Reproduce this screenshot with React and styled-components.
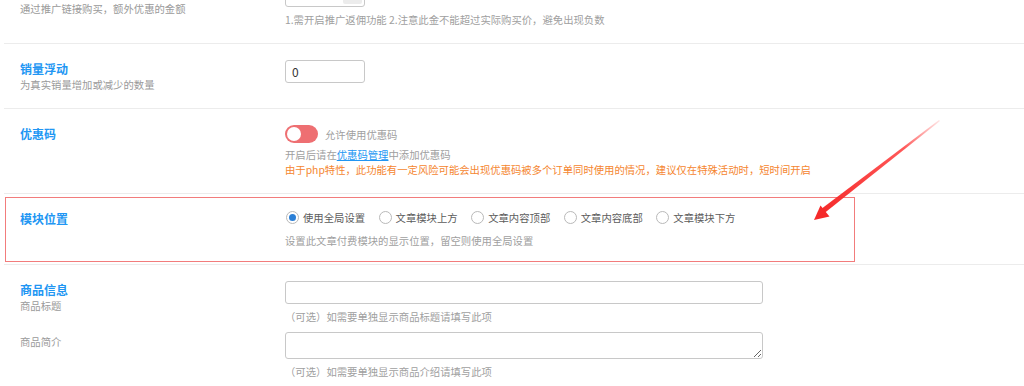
import React from "react";
import styled, { createGlobalStyle } from "styled-components";

const Global = createGlobalStyle`
  html, body { margin: 0; padding: 0; background: #fff; }
  body {
    font-family: "Noto Sans CJK SC", "Noto Sans", sans-serif;
    -webkit-font-smoothing: antialiased;
  }
  * { box-sizing: border-box; }
`;

const Viewport = styled.div`
  position: relative;
  width: 1024px;
  height: 386px;
  overflow: hidden;
`;

const Form = styled.div`
  margin-top: -32px;
  padding-left: 4px;
`;

const Row = styled.div`
  position: relative;
  display: flex;
  flex-direction: ${(p) => (p.$stack ? "column" : "row")};
  gap: ${(p) => (p.$stack ? "8px" : "0")};
  padding: 16px 0;
  border-bottom: 1px solid #ececec;
`;

const Line = styled.div`
  display: flex;
`;

const LabelCol = styled.div`
  width: 281px;
  flex: none;
  padding-left: 16px;
  padding-top: ${(p) => p.$pt || 0}px;
`;

const Title = styled.div`
  font-size: 12px;
  font-weight: 700;
  line-height: 17px;
  color: #2196f3;
`;

const Sub = styled.div`
  font-size: 10.35px;
  line-height: 15px;
  color: #9a9a9a;
`;

const Content = styled.div`
  flex: 1;
  display: flex;
  flex-direction: column;
  align-items: flex-start;
`;

const Help = styled.div`
  font-size: 10.35px;
  line-height: 15px;
  margin-top: ${(p) => p.$mt ?? 0}px;
  color: ${(p) => (p.$warn ? "#f5862f" : "#a0a0a0")};
`;

const Link = styled.a`
  color: #2196f3;
  text-decoration: underline;
`;

const Field = styled.div`
  display: flex;
  width: ${(p) => p.$w}px;
  height: ${(p) => p.$h || 23}px;
  border: 1px solid #c8c8c8;
  border-radius: 3px;
  background: #fff;
  overflow: hidden;
`;

const TextInput = styled.input`
  flex: 1;
  min-width: 0;
  border: none;
  outline: none;
  background: transparent;
  padding: 0 6px;
  font-family: inherit;
  font-size: 12px;
  color: #333;
`;

const Spinner = styled.span`
  width: 19px;
  margin: 2px 2px 2px 0;
  background: #ececec;
  border-radius: 2px;
`;

const TextArea = styled.textarea`
  width: 478px;
  height: 27px;
  border: 1px solid #c8c8c8;
  border-radius: 3px;
  padding: 3px 6px;
  font-family: inherit;
  font-size: 12px;
  resize: vertical;
  outline: none;
  display: block;
`;

const ToggleLine = styled.div`
  display: flex;
  align-items: center;
  gap: 7px;
  height: 18px;
  margin-bottom: 4px;
`;

const Toggle = styled.span`
  display: flex;
  align-items: center;
  width: 33px;
  height: 18px;
  padding: 2px;
  border-radius: 9px;
  background: #ee6f72;
  &::before {
    content: "";
    width: 14px;
    height: 14px;
    border-radius: 50%;
    background: #fff;
  }
`;

const ToggleText = styled.span`
  font-size: 10.35px;
  color: #a0a0a0;
`;

const RadioGroup = styled.div`
  display: flex;
  align-items: center;
  gap: 13.5px;
  height: 14px;
  padding-left: 1px;
`;

const RadioItem = styled.label`
  display: flex;
  align-items: center;
  gap: 4px;
  font-size: 10.35px;
  color: #5c5c5c;
`;

const RadioDot = styled.span`
  width: 13px;
  height: 13px;
  border-radius: 50%;
  border: 1px solid #b9b9b9;
  background: #fff;
  display: flex;
  align-items: center;
  justify-content: center;
  &::after {
    content: "";
    width: 7px;
    height: 7px;
    border-radius: 50%;
    background: ${(p) => (p.$on ? "#2b7fd6" : "transparent")};
  }
`;

const Highlight = styled.div`
  position: absolute;
  top: 3px;
  left: 1px;
  width: 850px;
  height: 65px;
  border: 1px solid #f27c7c;
  pointer-events: none;
`;

const Arrow = styled.svg`
  position: absolute;
  top: 0;
  left: 0;
  pointer-events: none;
`;

const positions = ["使用全局设置", "文章模块上方", "文章内容顶部", "文章内容底部", "文章模块下方"];

export default function App() {
  return (
    <Viewport>
      <Global />
      <Form>
        <Row>
          <LabelCol $pt={17}>
            <Sub>通过推广链接购买，额外优惠的金额</Sub>
          </LabelCol>
          <Content>
            <Field $w={80}>
              <TextInput readOnly value="" />
              <Spinner />
            </Field>
            <Help $mt={5}>1.需开启推广返佣功能 2.注意此金不能超过实际购买价，避免出现负数</Help>
          </Content>
        </Row>

        <Row>
          <LabelCol>
            <Title>销量浮动</Title>
            <Sub>为真实销量增加或减少的数量</Sub>
          </LabelCol>
          <Content>
            <Field $w={80}>
              <TextInput readOnly value="0" />
            </Field>
          </Content>
        </Row>

        <Row>
          <LabelCol>
            <Title>优惠码</Title>
          </LabelCol>
          <Content>
            <ToggleLine>
              <Toggle />
              <ToggleText>允许使用优惠码</ToggleText>
            </ToggleLine>
            <Help>
              开启后请在<Link>优惠码管理</Link>中添加优惠码
            </Help>
            <Help $warn>
              由于php特性，此功能有一定风险可能会出现优惠码被多个订单同时使用的情况，建议仅在特殊活动时，短时间开启
            </Help>
          </Content>
        </Row>

        <Row>
          <Highlight />
          <LabelCol>
            <Title>模块位置</Title>
          </LabelCol>
          <Content>
            <RadioGroup>
              {positions.map((p, i) => (
                <RadioItem key={p}>
                  <RadioDot $on={i === 0} />
                  {p}
                </RadioItem>
              ))}
            </RadioGroup>
            <Help $mt={9}>设置此文章付费模块的显示位置，留空则使用全局设置</Help>
          </Content>
        </Row>

        <Row $stack>
          <Line>
            <LabelCol>
              <Title>商品信息</Title>
              <Sub>商品标题</Sub>
            </LabelCol>
            <Content>
              <Field $w={478}>
                <TextInput readOnly value="" />
              </Field>
              <Help $mt={5}>（可选）如需要单独显示商品标题请填写此项</Help>
            </Content>
          </Line>
          <Line>
            <LabelCol $pt={2}>
              <Sub>商品简介</Sub>
            </LabelCol>
            <Content>
              <TextArea readOnly />
              <Help $mt={5}>（可选）如需要单独显示商品介绍请填写此项</Help>
            </Content>
          </Line>
        </Row>
      </Form>

      <Arrow width="1024" height="386" viewBox="0 0 1024 386">
        <defs>
          <linearGradient id="shaft" x1="939" y1="120" x2="822" y2="214" gradientUnits="userSpaceOnUse">
            <stop offset="0" stopColor="#ff4d4d" stopOpacity="0.15" />
            <stop offset="0.3" stopColor="#ff3b3b" stopOpacity="0.85" />
            <stop offset="1" stopColor="#f52a2a" />
          </linearGradient>
        </defs>
        <polygon points="939,120 940,121 824.5,213 820.5,209.5" fill="url(#shaft)" />
        <polygon points="814,220 820.5,205.5 829.5,216.5" fill="#f52a2a" />
      </Arrow>
    </Viewport>
  );
}
